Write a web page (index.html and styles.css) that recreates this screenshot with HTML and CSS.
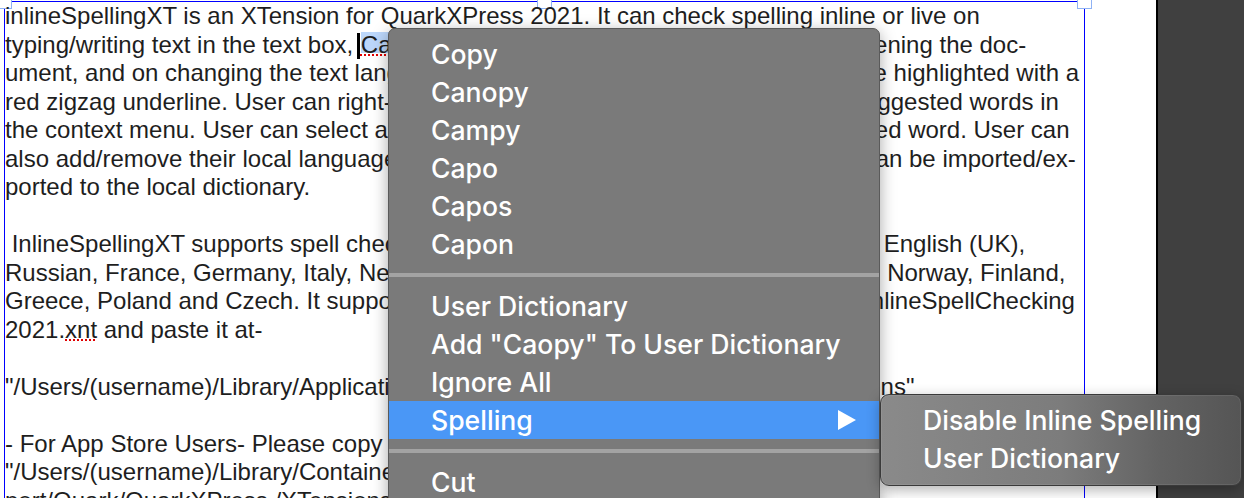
FILE: index.html
```html
<!DOCTYPE html>
<html lang="en">
<head>
<meta charset="utf-8">
<title>inlineSpellingXT</title>
<link rel="stylesheet" href="styles.css">
</head>
<body>
<div class="screen">
  <div class="page">
    <div class="textbox">
      <span class="handle handle-left"></span>
      <span class="handle handle-mid"></span>
      <span class="handle handle-right"></span>
      <div class="story">
        <div class="ln">inlineSpellingXT is an XTension for QuarkXPress 2021. It can check spelling inline or live on</div>
        <div class="ln">typing/writing text in the text box, <span class="caret"></span><span class="sel misspelled">Ca</span><span class="misspelled">opy</span>, on pasting a text into the text box,  on opening the doc-</div>
        <div class="ln">ument, and on changing the text language. Misspelled words in the text box, will be highlighted with a</div>
        <div class="ln">red zigzag underline. User can right-click on the misspelled word in order to get suggested words in</div>
        <div class="ln">the context menu. User can select a suggested word to replace the typed misspelled word. User can</div>
        <div class="ln">also add/remove their local language dictionary files. Their user dictionary words can be imported/ex-</div>
        <div class="ln">ported to the local dictionary.</div>
        <div class="ln"> </div>
        <div class="ln"> InlineSpellingXT supports spell checking for 14 languages, such as: English (US), English (UK),</div>
        <div class="ln">Russian, France, Germany, Italy, Netherlands, Spain, Sweden, Denmark, Belgium, Norway, Finland,</div>
        <div class="ln">Greece, Poland and Czech. It supports QuarkXPress 2021 on macOS. Copy the InlineSpellChecking</div>
        <div class="ln">2021.<span class="misspelled">xnt</span> and paste it at-</div>
        <div class="ln"> </div>
        <div class="ln">"/Users/(username)/Library/Application Support/Quark/QuarkXPress 2021/XTensions"</div>
        <div class="ln"> </div>
        <div class="ln">- For App Store Users- Please copy InlineSpellChecking 2021.xnt and paste it at-</div>
        <div class="ln">"/Users/(username)/Library/Containers/com.quark.QuarkXPress/Data/Library/Application Sup-</div>
        <div class="ln">port/Quark/QuarkXPress /XTensions"</div>
      </div>
    </div>
  </div>
  <div class="pasteboard"></div>

  <div class="menu">
    <div class="item">Copy</div>
    <div class="item">Canopy</div>
    <div class="item">Campy</div>
    <div class="item">Capo</div>
    <div class="item">Capos</div>
    <div class="item">Capon</div>
    <div class="sep"></div>
    <div class="item">User Dictionary</div>
    <div class="item">Add "Caopy" To User Dictionary</div>
    <div class="item">Ignore All</div>
    <div class="item active">Spelling
      <svg class="arrow" width="18" height="20" viewBox="0 0 18 20"><polygon points="0,0 18,10 0,20" fill="#ffffff"/></svg>
    </div>
    <div class="sep"></div>
    <div class="item">Cut</div>
  </div>

  <div class="submenu">
    <div class="item">Disable Inline Spelling</div>
    <div class="item">User Dictionary</div>
  </div>
</div>
</body>
</html>
```

FILE: styles.css
```css
html, body {
  margin: 0;
  padding: 0;
  background: #3f3f3f;
}

.screen {
  position: relative;
  display: flex;
  width: 1244px;
  height: 498px;
  overflow: hidden;
}

.page {
  width: 1156px;
  flex: none;
  background: #ffffff;
  padding-top: 1px;
  box-sizing: border-box;
}

.pasteboard {
  flex: 1;
  background: #404040;
  border-left: 2px solid #000000;
}

.textbox {
  position: relative;
  margin-left: 4px;
  width: 1081px;
  height: 520px;
  box-sizing: border-box;
  border: 1px solid #0000ff;
  border-bottom: none;
}

.handle {
  position: absolute;
  top: -8px;
  width: 13px;
  height: 13px;
  border: 1px solid #8fb2f4;
  background: #ffffff;
}

.handle-left { left: -8px; }
.handle-mid { left: 532px; }
.handle-right { right: -8px; }

.story {
  position: relative;
  font-family: "Liberation Sans", Arial, Helvetica, sans-serif;
  font-size: 24px;
  line-height: 28.5px;
  color: #1e1e1e;
}

.ln {
  white-space: pre;
  height: 28.5px;
}

.caret {
  display: inline-block;
  width: 3px;
  height: 26px;
  margin-left: -3px;
  margin-right: 1px;
  background: #000000;
  vertical-align: -6px;
}

.sel {
  background: linear-gradient(#bcd7fb, #bcd7fb) no-repeat 0 1px / 100% 21px;
}

.misspelled {
  text-decoration: underline dotted #e00000;
  text-decoration-thickness: 2px;
  text-underline-offset: 2px;
}

/* context menu */
.menu {
  position: absolute;
  left: 388px;
  top: 28px;
  width: 492px;
  height: 500px;
  box-sizing: border-box;
  padding-top: 6px;
  background: #7a7a7a;
  border: 1px solid #5a5a5a;
  border-radius: 7px;
  box-shadow: 0 4px 16px rgba(0, 0, 0, 0.35);
  font-family: Inter, "Noto Sans", sans-serif;
  font-weight: 500;
  font-size: 26.6px;
  color: #ffffff;
}

.item {
  position: relative;
  display: flex;
  align-items: center;
  height: 38px;
  padding-left: 42px;
  padding-right: 23px;
}

.item.active {
  background: #4a97f6;
}

.arrow {
  margin-left: auto;
}

.sep {
  height: 24px;
  display: flex;
  align-items: center;
}

.sep::before {
  content: "";
  display: block;
  width: 100%;
  height: 4px;
  background: #a3a3a3;
}

.submenu {
  position: absolute;
  left: 880px;
  top: 394px;
  width: 362px;
  height: 92px;
  box-sizing: border-box;
  padding-top: 6px;
  background: linear-gradient(to right, #8a8a8a 0%, #7c7c7c 50%, #626262 78%, #555555 100%);
  border: 1px solid #3a3a3a;
  border-radius: 9px;
  box-shadow: 0 4px 14px rgba(0, 0, 0, 0.3), inset 0 0 0 1px rgba(255, 255, 255, 0.08);
  font-family: Inter, "Noto Sans", sans-serif;
  font-weight: 500;
  font-size: 26.6px;
  color: #ffffff;
}
```
